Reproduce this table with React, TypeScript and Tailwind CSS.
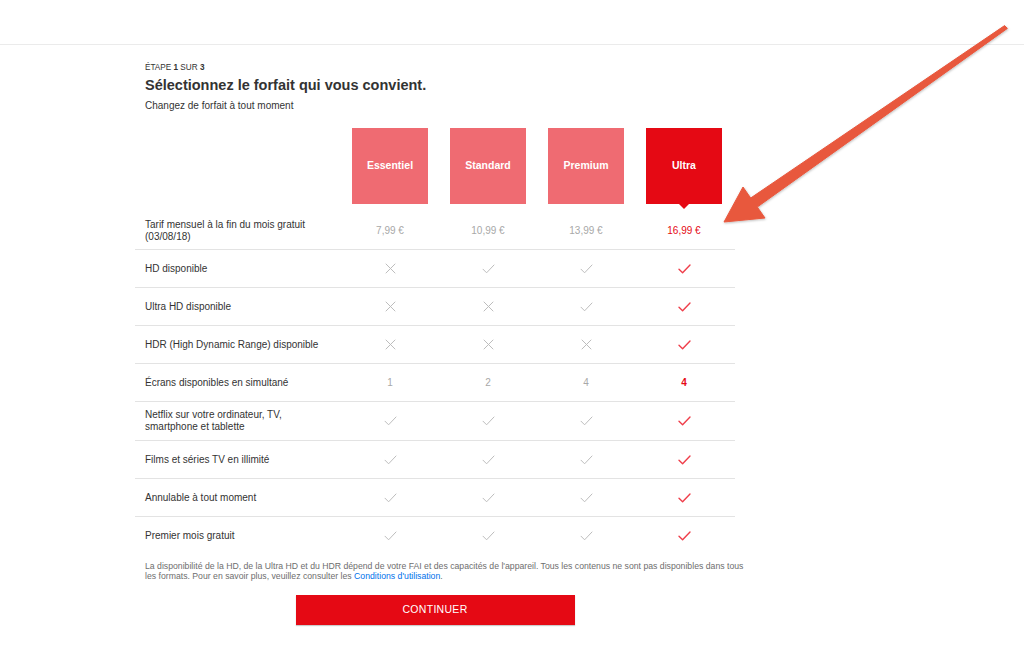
import React from "react";

type Cell = "x" | "c" | string;

const Check = ({ red }: { red?: boolean }) => (
  <svg width="13" height="10" viewBox="0 0 13 10" fill="none">
    <path
      d="M1 5.2 L4.6 8.8 L12 1"
      stroke={red ? "#ef3e4a" : "#bdbdbd"}
      strokeWidth={red ? 1.4 : 1}
      strokeLinecap="round"
      strokeLinejoin="round"
    />
  </svg>
);

const Cross = () => (
  <svg width="11" height="11" viewBox="0 0 11 11" fill="none">
    <path d="M1 1 L10 10 M10 1 L1 10" stroke="#bdbdbd" strokeWidth="1" strokeLinecap="round" />
  </svg>
);

const rows: { label: React.ReactNode; cells: Cell[]; h?: string }[] = [
  { label: "HD disponible", cells: ["x", "c", "c", "c"] },
  { label: "Ultra HD disponible", cells: ["x", "x", "c", "c"] },
  { label: "HDR (High Dynamic Range) disponible", cells: ["x", "x", "x", "c"] },
  { label: "Écrans disponibles en simultané", cells: ["1", "2", "4", "4"] },
  {
    label: (
      <>
        Netflix sur votre ordinateur, TV,
        <br />
        smartphone et tablette
      </>
    ),
    cells: ["c", "c", "c", "c"],
    h: "h-[39px]",
  },
  { label: "Films et séries TV en illimité", cells: ["c", "c", "c", "c"] },
  { label: "Annulable à tout moment", cells: ["c", "c", "c", "c"] },
  { label: "Premier mois gratuit", cells: ["c", "c", "c", "c"] },
];

function renderCell(v: Cell, i: number) {
  const red = i === 3;
  if (v === "c") return <Check red={red} />;
  if (v === "x") return <Cross />;
  return (
    <span className={red ? "text-[#e50914] font-bold text-[10px]" : "text-[#a8a8a8] text-[10px]"}>{v}</span>
  );
}

export default function App() {
  const plans = ["Essentiel", "Standard", "Premium", "Ultra"];
  const prices = ["7,99 €", "10,99 €", "13,99 €", "16,99 €"];
  return (
    <div
      className="relative w-[1024px] h-[652px] bg-white overflow-hidden text-[#333]"
      style={{ fontFamily: '"Liberation Sans", Arial, Helvetica, sans-serif' }}
    >
      <div className="h-[45px] border-b border-[#ebebeb]" />
      <div className="ml-[135px] w-[600px]">
        <div className="pl-[10px] mt-[17px] text-[8.2px] leading-[11px] text-[#333]">
          ÉTAPE <b>1</b> SUR <b>3</b>
        </div>
        <h1 className="pl-[10px] mt-[3px] text-[14.5px] leading-[18px] font-bold text-[#333]">
          Sélectionnez le forfait qui vous convient.
        </h1>
        <div className="pl-[10px] mt-[6px] text-[10px] leading-[12px] text-[#333]">
          Changez de forfait à tout moment
        </div>

        <div className="grid grid-cols-[206px_repeat(4,98px)] mt-[16px]">
          <div />
          {plans.map((p, i) => (
            <div key={p} className="flex justify-center">
              <div
                className={`relative w-[76px] h-[76px] flex items-center justify-center text-white font-bold text-[10.5px] ${
                  i === 3 ? "bg-[#e50914]" : "bg-[#ef6b72]"
                }`}
              >
                {p}
                {i === 3 && (
                  <div className="absolute left-1/2 -translate-x-1/2 top-full w-0 h-0 border-l-[5px] border-r-[5px] border-t-[5px] border-l-transparent border-r-transparent border-t-[#e50914]" />
                )}
              </div>
            </div>
          ))}
        </div>

        <div className="mt-[8px]">
          <div className="grid grid-cols-[206px_repeat(4,98px)] h-[38px] items-center border-b border-[#e3e3e3]">
            <div className="pl-[10px] text-[10px] leading-[12px]">
              Tarif mensuel à la fin du mois gratuit
              <br />
              (03/08/18)
            </div>
            {prices.map((p, i) => (
              <div
                key={p}
                className={`text-center text-[10px] ${i === 3 ? "text-[#e50914] font-medium" : "text-[#a8a8a8]"}`}
              >
                {p}
              </div>
            ))}
          </div>
          {rows.map((r, ri) => (
            <div
              key={ri}
              className={`grid grid-cols-[206px_repeat(4,98px)] ${r.h ?? "h-[38px]"} items-center ${
                ri < rows.length - 1 ? "border-b border-[#e3e3e3]" : ""
              }`}
            >
              <div className="pl-[10px] text-[10px] leading-[12px]">{r.label}</div>
              {r.cells.map((c, i) => (
                <div key={i} className="flex justify-center items-center">
                  {renderCell(c, i)}
                </div>
              ))}
            </div>
          ))}
        </div>

        <p className="pl-[10px] w-[618px] mt-[6px] text-[8.7px] leading-[10px] text-[#6e6e6e]">
          La disponibilité de la HD, de la Ultra HD et du HDR dépend de votre FAI et des capacités de l'appareil. Tous les
          contenus ne sont pas disponibles dans tous les formats. Pour en savoir plus, veuillez consulter les{" "}
          <span className="text-[#0071eb]">Conditions d'utilisation</span>.
        </p>

        <div className="flex justify-center mt-[14px]">
          <button className="w-[279px] h-[30px] bg-[#e50914] text-white text-[10.5px] tracking-[0.3px] shadow-[0_1px_1px_rgba(0,0,0,0.2)]">
            CONTINUER
          </button>
        </div>
      </div>

      <svg className="absolute left-0 top-0 pointer-events-none" width="1024" height="652">
        <defs>
          <filter id="sh" x="-10%" y="-10%" width="120%" height="120%">
            <feDropShadow dx="0.5" dy="1" stdDeviation="1" floodColor="#000" floodOpacity="0.25" />
          </filter>
        </defs>
        <polygon
          points="1004.6,25.6 1007.4,28.4 757.3,207 765,218 724,222 743,187 750.7,198"
          fill="#e8583e"
          stroke="#e8583e"
          strokeWidth="1"
          strokeLinejoin="round"
          filter="url(#sh)"
        />
      </svg>
    </div>
  );
}
